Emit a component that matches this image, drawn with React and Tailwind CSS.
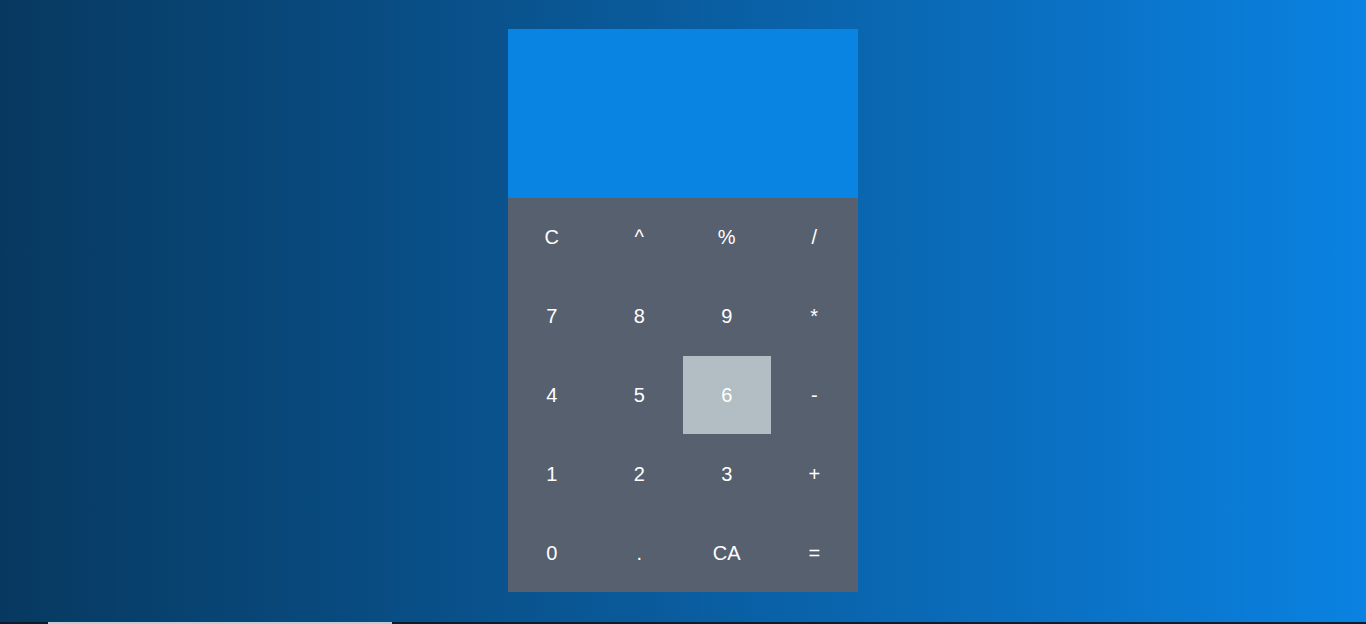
import React from 'react'

const keys = ['C', '^', '%', '/', '7', '8', '9', '*', '4', '5', '6', '-', '1', '2', '3', '+', '0', '.', 'CA', '=']

export default function App() {
  return (
    <div className="h-[624px] flex flex-col bg-gradient-to-r from-[#073960] to-[#0a82e2] font-['Liberation_Sans',Arial,sans-serif] overflow-hidden">
      <div className="flex-1 pt-[29px] flex justify-center">
        <div className="w-[350px] flex flex-col">
          {/* écran */}
          <div className="h-[169px] bg-[#0984e3]" />

          {/* touches */}
          <div className="grid grid-cols-4 bg-[#57606f]">
            {keys.map(k => (
              <button
                key={k}
                className={`h-[78.8px] flex items-center justify-center text-white text-[20px] ${
                  k === '6' ? 'bg-[#b2bec3]' : ''
                }`}
              >
                {k}
              </button>
            ))}
          </div>
        </div>
      </div>

      {/* barre de défilement */}
      <div className="h-[2px] bg-[#0b1c2c] flex">
        <div className="ml-[48px] w-[344px] bg-[#c3ccd4]" />
      </div>
    </div>
  )
}
